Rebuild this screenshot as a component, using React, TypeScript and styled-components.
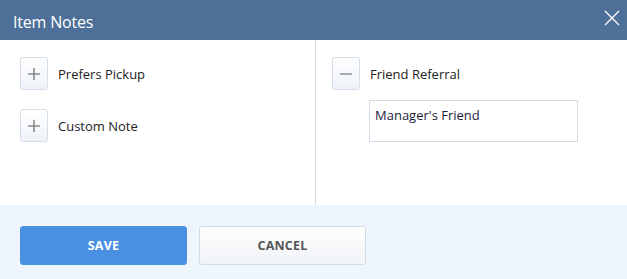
import styled, { createGlobalStyle } from 'styled-components';

const GlobalStyle = createGlobalStyle`
  html, body {
    margin: 0;
    padding: 0;
    background: #ffffff;
    font-family: 'Open Sans', 'Noto Sans', sans-serif;
  }
`;

const notes = [
  { id: 'pickup', name: 'Prefers Pickup' },
  { id: 'custom', name: 'Custom Note' },
];

export default function App() {
  return (
    <>
      <GlobalStyle />
      <Dialog>
        <Header>
          <Title>Item Notes</Title>
          <CloseButton aria-label="Close">
            <svg width="16" height="16" viewBox="0 0 16 16">
              <path d="M1 1 L15 15 M15 1 L1 15" stroke="#ffffff" strokeWidth="1.3" fill="none" />
            </svg>
          </CloseButton>
        </Header>
        <Body>
          <Column>
            {notes.map(({ id, name }) => (
              <NoteRow key={id}>
                <ToggleBox>
                  <svg width="14" height="14" viewBox="0 0 14 14">
                    <path d="M7 1 V13 M1 7 H13" stroke="#8a8a8a" strokeWidth="1.6" fill="none" />
                  </svg>
                </ToggleBox>
                <Label>{name}</Label>
              </NoteRow>
            ))}
          </Column>
          <Column $right>
            <NoteRow>
              <ToggleBox>
                <svg width="14" height="14" viewBox="0 0 14 14">
                  <path d="M1 7 H13" stroke="#9a9a9a" strokeWidth="1.6" fill="none" />
                </svg>
              </ToggleBox>
              <Label>Friend Referral</Label>
            </NoteRow>
            <NoteInput defaultValue="Manager's Friend" />
          </Column>
        </Body>
        <Footer>
          <Button $primary>SAVE</Button>
          <Button>CANCEL</Button>
        </Footer>
      </Dialog>
    </>
  );
}

const Dialog = styled.div`
  width: 627px;
  height: 279px;
  display: flex;
  flex-direction: column;
  background: #ffffff;
`;

const Header = styled.div`
  height: 40px;
  background: #4d6f98;
  display: flex;
  align-items: center;
  justify-content: space-between;
  padding: 0 5px 0 13px;
  box-sizing: border-box;
`;

const Title = styled.h1`
  margin: 0;
  font-size: 16px;
  font-weight: 400;
  letter-spacing: -0.2px;
  color: #ffffff;
  padding-top: 4px;
`;

const CloseButton = styled.button`
  background: none;
  border: none;
  padding: 0;
  width: 20px;
  height: 20px;
  margin-top: -4px;
  display: flex;
  align-items: center;
  justify-content: center;
`;

const Body = styled.div`
  height: 165px;
  display: flex;
`;

const Column = styled.div<{ $right?: boolean }>`
  flex: ${(p) => (p.$right ? '1' : '0 0 315px')};
  border-left: ${(p) => (p.$right ? '1px solid #d3dbe6' : 'none')};
  padding: 17px 0 0 ${(p) => (p.$right ? '16px' : '20px')};
  box-sizing: border-box;
  display: flex;
  flex-direction: column;
  gap: ${(p) => (p.$right ? '10px' : '19px')};
`;

const NoteRow = styled.div`
  display: flex;
  align-items: center;
  gap: 10px;
`;

const ToggleBox = styled.button`
  width: 28px;
  height: 33px;
  padding: 0;
  border: 1px solid #d6dee9;
  border-radius: 3px;
  background: linear-gradient(#ffffff, #eef2f8);
  display: flex;
  align-items: center;
  justify-content: center;
`;

const Label = styled.span`
  font-size: 13px;
  color: #222222;
`;

const NoteInput = styled.textarea`
  margin-left: 37px;
  width: 209px;
  height: 42px;
  box-sizing: border-box;
  border: 1px solid #d3dbe6;
  padding: 5px 5px;
  resize: none;
  font-family: 'Open Sans', 'Noto Sans', sans-serif;
  font-size: 13px;
  color: #1c1c3a;
  outline: none;
`;

const Footer = styled.div`
  flex: 1;
  background: #eef5fd;
  display: flex;
  align-items: center;
  gap: 12px;
  padding: 6px 0 0 20px;
`;

const Button = styled.button<{ $primary?: boolean }>`
  width: 167px;
  height: 39px;
  border-radius: 3px;
  font-family: 'Open Sans', 'Noto Sans', sans-serif;
  font-size: 12.5px;
  font-weight: 700;
  letter-spacing: 0.2px;
  color: ${(p) => (p.$primary ? '#ffffff' : '#555555')};
  background: ${(p) => (p.$primary ? '#4a90e2' : 'linear-gradient(#ffffff, #f1f4f8)')};
  border: 1px solid ${(p) => (p.$primary ? '#4a90e2' : '#d3dbe6')};
`;
